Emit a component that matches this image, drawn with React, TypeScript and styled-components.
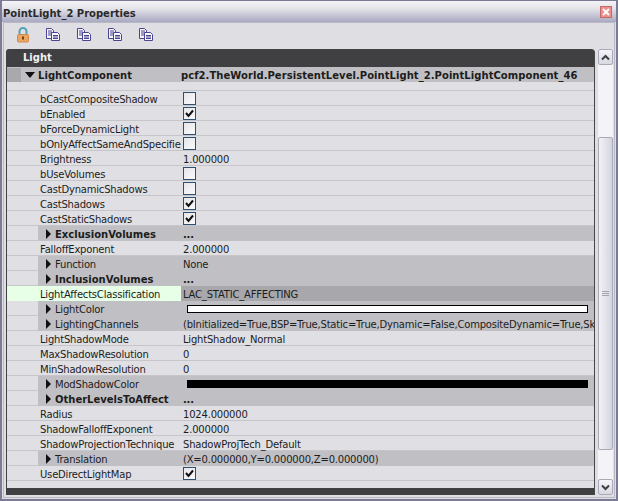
import React from 'react';
import styled, { createGlobalStyle } from 'styled-components';

const Global = createGlobalStyle`
  html, body { margin: 0; padding: 0; background: #e0e0e4; }
  #root { width: 618px; height: 501px; overflow: hidden; }
`;

const Win = styled.div`
  width: 618px; height: 501px; box-sizing: border-box;
  display: flex; flex-direction: column;
  background: #dfdfe3;
  border: 2px solid #7b7b96;
  border-top-width: 1px;
  font-family: "DejaVu Sans", sans-serif;
  font-size: 10px;
  letter-spacing: -0.2px;
  color: #1c1c1c;
`;
const TitleBar = styled.div`
  height: 21px; flex: none; box-sizing: border-box;
  display: flex; align-items: center; justify-content: space-between;
  padding: 3px 4px 0 1px;
  background: linear-gradient(#f4f4f7 0%, #e4e4ea 35%, #a9a9c2 100%);
  font-weight: 700; font-size: 10px; color: #2a2a2a; letter-spacing: 0;
`;
const CloseBtn = styled.div`
  width: 12px; height: 12px; box-sizing: border-box; margin-top: -3px;
  display: flex; align-items: center; justify-content: center;
  background: #ee8d8a; border: 1px solid #c36a66;
`;
const Frame = styled.div`
  flex: 1; min-height: 0; display: flex; flex-direction: column;
  margin: 0 1px 1px 1px;
  border: 1px solid #8c8ca0;
  border-top: 1px solid #f4f4f6;
  outline: 1px solid #b9b9c6;
  outline-offset: -1px;
`;
const Toolbar = styled.div`
  height: 26px; flex: none; display: flex; align-items: center; gap: 15px;
  padding-left: 12px; box-sizing: border-box; padding-bottom: 3px;
`;
const Content = styled.div`
  flex: 1; min-height: 0; display: flex; padding-left: 2px; gap: 3px;
`;
const Panel = styled.div`
  width: 589px; height: 446px; box-sizing: border-box; display: flex; flex-direction: column;
  background: #404042; border-radius: 3px 4px 0 0; overflow: hidden;
  border-right: 1px solid #47474a;
`;
const PanelHead = styled.div`
  height: 18px; flex: none; display: flex; align-items: center; padding: 0 0 1px 17px; box-sizing: border-box;
  color: #f2f2f2; font-weight: 700; font-size: 10px; letter-spacing: 0;
`;
const Category = styled.div`
  height: 15px; flex: none; display: flex; align-items: center; background: #c0c0c4; margin-left: 1px;
  font-weight: 700; letter-spacing: 0.05px; padding-top: 1px; box-sizing: border-box;
`;
const CatGutter = styled.div`
  width: 14px; height: 100%; background: #a9a9ad; flex: none;
`;
const CatName = styled.div`
  width: 160px; flex: none; display: flex; align-items: center; gap: 3px; padding-left: 4px; box-sizing: border-box;
`;
const Spacer = styled.div`
  height: 9px; flex: none; background: #e0e0e4; margin-left: 1px; border-bottom: 1px solid #c6c6ca; box-sizing: border-box;
`;
const Rows = styled.div`
  flex: 1; min-height: 0; background: #e0e0e4; margin-left: 1px; display: flex; flex-direction: column;
  margin-bottom: 7px;
`;
const Row = styled.div`
  height: 15px; box-sizing: border-box; flex: none; display: grid;
  grid-template-columns: 174px 1fr;
  border-bottom: 1px solid #c6c6ca;
`;
const NameCell = styled.div<{ $selected?: boolean; $struct?: boolean; $bold?: boolean }>`
  display: flex; align-items: center; overflow: hidden; white-space: nowrap; height: 15px; box-sizing: border-box;
  padding-left: ${p => (p.$struct ? '7px' : '33px')};
  padding-top: 1px;
  margin-left: ${p => (p.$struct ? '31px' : '0')};
  gap: 3px;
  background: ${p => (p.$selected ? '#e6ffe6' : p.$struct ? '#c0c0c4' : 'transparent')};
  font-weight: ${p => (p.$bold ? 700 : 400)};
  letter-spacing: ${p => (p.$bold ? '0' : '-0.2px')};
`;
const ValueCell = styled.div<{ $selected?: boolean; $struct?: boolean; $bold?: boolean }>`
  display: flex; align-items: center; overflow: hidden; white-space: nowrap; height: 15px; box-sizing: border-box;
  padding-left: 2px;
  background: ${p => (p.$selected ? '#a8a8ac' : p.$struct ? '#c0c0c4' : 'transparent')};
  font-weight: ${p => (p.$bold ? 700 : 400)};
`;
const ValueText = styled.span`
  padding-top: 1px;
`;
const Check = styled.div`
  width: 13px; height: 13px; box-sizing: border-box; flex: none;
  border: 1px solid #2f4f70; background: linear-gradient(135deg, #e6e6ea, #fafafc);
  display: flex; align-items: center; justify-content: center;
`;
const ColorBar = styled.div<{ $color: string }>`
  width: 401px; height: 8px; box-sizing: border-box; margin-left: 4px;
  border: 1px solid #000; background: ${p => p.$color};
`;
const Scrollbar = styled.div`
  width: 15px; height: 446px; flex: none; display: flex; flex-direction: column;
  background: #f3f3f8;
`;
const ScrollBtn = styled.div`
  width: 15px; height: 16px; flex: none; box-sizing: border-box;
  display: flex; align-items: center; justify-content: center;
  background: linear-gradient(#f4f4f8, #d8d8e2);
  border: 1px solid #a9a9b8; border-radius: 2px;
`;
const Thumb = styled.div`
  width: 15px; height: 313px; margin-top: 72px; box-sizing: border-box; flex: none;
  border: 1px solid #a9a9b8; border-radius: 2px;
  background: linear-gradient(90deg, #f2f2f6, #d4d4e0);
  display: flex; flex-direction: column; align-items: center; justify-content: center; gap: 1px;
`;
const Grip = styled.div`
  width: 7px; height: 1px; background: #a4a4b0;
`;
const Track = styled.div`
  flex: 1;
`;

const Lock = () => (
  <svg width="14" height="16" viewBox="0 0 14 16">
    <path d="M3.5 8V4.5a3.5 3.5 0 0 1 7 0V8" fill="none" stroke="#4fa3b8" strokeWidth="2" />
    <rect x="1.5" y="7.5" width="11" height="7.5" rx="1" fill="#eda662" stroke="#d08a4c" />
    <rect x="6" y="9.5" width="2" height="3" fill="#70401a" />
  </svg>
);
const Copy = () => (
  <svg width="16" height="15" viewBox="0 0 16 15">
    <path d="M1.5 1.5h5l2 2v8h-7z" fill="#f4f4fb" stroke="#4a4590" />
    <path d="M3 4h4M3 6h4M3 8h3" stroke="#4a4590" />
    <path d="M6.5 5.5h6l2 2v6h-8z" fill="#f8f8ff" stroke="#4a4590" />
    <path d="M8 8.5h5M8 10h5M8 11.5h5" stroke="#4a4590" />
  </svg>
);
const ArrowRight = () => (
  <svg width="7" height="10" viewBox="0 0 7 10"><path d="M1 0l5 5-5 5z" fill="#111" /></svg>
);
const ArrowDown = () => (
  <svg width="10" height="6" viewBox="0 0 10 6"><path d="M0 0h10L5 6z" fill="#111" /></svg>
);
const Tick = () => (
  <svg width="9" height="9" viewBox="0 0 9 9"><path d="M1 4l2.5 3L8 1.5" fill="none" stroke="#111" strokeWidth="2" /></svg>
);
const Chevron = ({ up }: { up?: boolean }) => (
  <svg width="9" height="7" viewBox="0 0 9 7">
    <path d={up ? 'M1 5.5l3.5-3.5L8 5.5' : 'M1 1.5L4.5 5 8 1.5'} fill="none" stroke="#3c3c44" strokeWidth="2" />
  </svg>
);

type R = {
  n: string; v?: string; c?: boolean; s?: boolean; b?: boolean; sel?: boolean; bar?: string;
};
const rows: R[] = [
  { n: 'bCastCompositeShadow', c: false },
  { n: 'bEnabled', c: true },
  { n: 'bForceDynamicLight', c: false },
  { n: 'bOnlyAffectSameAndSpecifie', c: false },
  { n: 'Brightness', v: '1.000000' },
  { n: 'bUseVolumes', c: false },
  { n: 'CastDynamicShadows', c: false },
  { n: 'CastShadows', c: true },
  { n: 'CastStaticShadows', c: true },
  { n: 'ExclusionVolumes', v: '...', s: true, b: true },
  { n: 'FalloffExponent', v: '2.000000' },
  { n: 'Function', v: 'None', s: true },
  { n: 'InclusionVolumes', v: '...', s: true, b: true },
  { n: 'LightAffectsClassification', v: 'LAC_STATIC_AFFECTING', sel: true },
  { n: 'LightColor', s: true, bar: '#ffffff' },
  { n: 'LightingChannels', v: '(bInitialized=True,BSP=True,Static=True,Dynamic=False,CompositeDynamic=True,Skybox=False)', s: true },
  { n: 'LightShadowMode', v: 'LightShadow_Normal' },
  { n: 'MaxShadowResolution', v: '0' },
  { n: 'MinShadowResolution', v: '0' },
  { n: 'ModShadowColor', s: true, bar: '#000000' },
  { n: 'OtherLevelsToAffect', v: '...', s: true, b: true },
  { n: 'Radius', v: '1024.000000' },
  { n: 'ShadowFalloffExponent', v: '2.000000' },
  { n: 'ShadowProjectionTechnique', v: 'ShadowProjTech_Default' },
  { n: 'Translation', v: '(X=0.000000,Y=0.000000,Z=0.000000)', s: true },
  { n: 'UseDirectLightMap', c: true },
];

export default function App() {
  return (
    <Win>
      <Global />
      <TitleBar>
        <span>PointLight_2 Properties</span>
        <CloseBtn>
          <svg width="8" height="8" viewBox="0 0 8 8"><path d="M1 1l6 6M7 1L1 7" stroke="#fff" strokeWidth="2" /></svg>
        </CloseBtn>
      </TitleBar>
      <Frame>
        <Toolbar>
          <Lock />
          <Copy /><Copy /><Copy /><Copy />
        </Toolbar>
        <Content>
          <Panel>
            <PanelHead>Light</PanelHead>
            <Category>
              <CatGutter />
              <CatName><ArrowDown />LightComponent</CatName>
              <span>pcf2.TheWorld.PersistentLevel.PointLight_2.PointLightComponent_46</span>
            </Category>
            <Spacer />
            <Rows>
              {rows.map(r => (
                <Row key={r.n}>
                  <NameCell $selected={r.sel} $struct={r.s} $bold={r.b}>
                    {r.s && <ArrowRight />}
                    {r.n}
                  </NameCell>
                  <ValueCell $selected={r.sel} $struct={r.s} $bold={r.b}>
                    {r.c !== undefined && <Check>{r.c && <Tick />}</Check>}
                    {r.bar && <ColorBar $color={r.bar} />}
                    {r.v && <ValueText>{r.v}</ValueText>}
                  </ValueCell>
                </Row>
              ))}
            </Rows>
          </Panel>
          <Scrollbar>
            <ScrollBtn><Chevron up /></ScrollBtn>
            <Thumb><Grip /><Grip /><Grip /></Thumb>
            <Track />
            <ScrollBtn><Chevron /></ScrollBtn>
          </Scrollbar>
        </Content>
      </Frame>
    </Win>
  );
}
